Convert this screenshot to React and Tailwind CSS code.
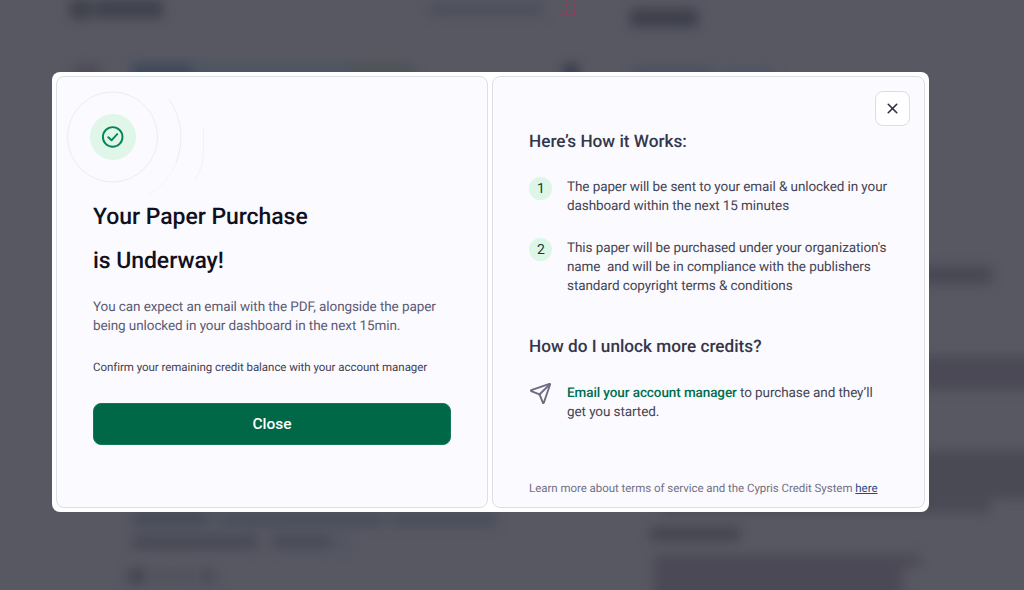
import { Send, X } from 'lucide-react'

const steps = [
  ['The paper will be sent to your email & unlocked in your', 'dashboard within the next 15 minutes'],
  [
    "This paper will be purchased under your organization's",
    'name \u00a0and will be in compliance with the publishers',
    'standard copyright terms & conditions',
  ],
]

// Blurred page behind the modal, row by row; each bar is offset from the one before it
const leftRows = [
  {
    row: 'h-[19px]',
    bars: ['ml-[70px] h-[19px] w-[22px] bg-[#3e404b]', 'ml-[3px] h-[18px] w-[68px] bg-[#3f414c]', 'ml-[266px] mt-[3px] h-[13px] w-[114px] bg-[#4c505c]'],
  },
  {
    row: 'mt-[44px] h-[20px]',
    bars: ['ml-[74px] h-[20px] w-[26px] bg-[#4e4c59]', 'ml-[32px] h-[20px] w-[60px] bg-[#3e4959]', 'h-[20px] w-[160px] bg-[#4c5562]', 'h-[20px] w-[62px] bg-[#4d5456]'],
  },
  {
    row: 'mt-[427px] h-[17px]',
    bars: ['ml-[134px] h-[17px] w-[72px] bg-[#484b58]', 'h-[17px] w-[16px] bg-[#50545f]', 'h-[17px] w-[160px] bg-[#494f5b]', 'h-[17px] w-[12px] bg-[#50545f]', 'h-[17px] w-[102px] bg-[#484f5b]'],
  },
  {
    row: 'mt-[8px] h-[14px]',
    bars: ['ml-[132px] h-[14px] w-[126px] bg-[#474955]', 'ml-[14px] h-[14px] w-[58px] bg-[#484b57]', 'h-[16px] w-[22px] bg-[#515562]'],
  },
  {
    row: 'mt-[20px] h-[14px]',
    bars: ['ml-[129px] h-[14px] w-[16px] bg-[#42434e]', 'ml-[6px] h-[14px] w-[44px] bg-[#52525d]', 'ml-[6px] h-[14px] w-[14px] bg-[#4b4b57]'],
  },
]

const rightRows = [
  { row: 'mt-[9px] h-[18px]', bars: ['ml-[58px] h-[18px] w-[68px] bg-[#3d3f4b]'] },
  {
    row: 'mt-[38px] h-[12px]',
    bars: ['ml-[-8px] h-[12px] w-[14px] bg-[#303345]', 'ml-[54px] mt-[2px] h-[12px] w-[80px] bg-[#475160]', 'ml-[10px] mt-[2px] h-[12px] w-[52px] bg-[#4e5561]'],
  },
  { row: 'mt-[189px] h-[18px]', bars: ['ml-[300px] h-[18px] w-[120px] bg-[#484854]'] },
  { row: 'mt-[72px] h-[34px]', bars: ['ml-[100px] h-[34px] w-[400px] bg-[#4a4955]'] },
  { row: 'mt-[61px] h-[62px]', bars: ['ml-[90px] h-[62px] w-[328px] bg-[#4a4a55]', 'h-[48px] w-[90px] bg-[#4a4a55]'] },
  { row: 'mt-[14px] h-[14px]', bars: ['ml-[78px] h-[14px] w-[90px] bg-[#454551]'] },
  { row: 'mt-[14px] h-[11px]', bars: ['ml-[82px] h-[11px] w-[266px] bg-[#4a4955]'] },
  { row: 'h-[50px]', bars: ['ml-[82px] h-[50px] w-[248px] bg-[#4a4955]'] },
]

const BlurredColumn = ({ rows, className }) => (
  <div className={className}>
    {rows.map(({ row, bars }) => (
      <div key={bars[0]} className={`flex items-start ${row}`}>
        {bars.map((bar) => (
          <div key={bar} className={`shrink-0 ${bar}`} />
        ))}
      </div>
    ))}
  </div>
)

const Backdrop = () => (
  <div className="absolute inset-0 overflow-hidden bg-[#585863]">
    <div className="flex h-full w-full blur-[6px]">
      <BlurredColumn rows={leftRows} className="w-[572px] shrink-0" />
      <BlurredColumn rows={rightRows} className="w-[452px] shrink-0" />
    </div>
    <svg className="absolute left-[559px] top-0" width="17" height="16" fill="none" stroke="#84405f" strokeDasharray="2 1">
      <path d="M.5 0v15M7.5 0v15M15.5 0v15M0 7.5h16M0 14.5h16" />
    </svg>
  </div>
)

const SuccessMark = () => (
  <svg className="shrink-0" width="170" height="130" viewBox="0 0 170 130" fill="none">
    <circle cx="55.5" cy="60" r="45" stroke="#ececf1" />
    <path d="M112 22a68 68 0 0 1 7 64" stroke="#ececf1" />
    <path d="M119 86a68 68 0 0 1-27 32" stroke="#f5f5f9" />
    <path d="M146.5 51v28q-2 14-9 25" stroke="#f3f3f7" />
    <circle cx="56" cy="60" r="23" fill="#dff6e8" />
    <circle cx="55.7" cy="59.9" r="9.8" stroke="#07845a" strokeWidth="1.9" />
    <path d="m51.3 60.2 3.2 3.1 5.7-6.2" stroke="#07845a" strokeWidth="1.9" strokeLinecap="round" strokeLinejoin="round" />
  </svg>
)

const StepNumber = ({ children }) => (
  <span className="-mt-px flex size-[23px] shrink-0 items-center justify-center rounded-full bg-[#dcf6e7] pl-px pt-[2px] text-[14px] text-[#1c3b35]">
    {children}
  </span>
)

export default function App() {
  return (
    <div className="relative flex h-[590px] w-[1024px] overflow-hidden bg-[#585863] pl-[52px] pt-[72px] font-['Roboto',sans-serif] [text-rendering:geometricPrecision]">
      <Backdrop />
      <div className="relative flex h-[439.5px] w-[876.5px] gap-1 rounded-lg bg-white p-1">
        <section className="flex w-[432px] shrink-0 flex-col rounded-lg border border-[#dddfe8] bg-[#fbfaff]">
          <SuccessMark />
          <div className="-mt-[12px] w-[394px] pl-9">
            <h1 className="text-[23px] font-medium leading-[44px] tracking-[-0.06px] text-[#10101e]">
              Your Paper Purchase
              <br />
              is Underway!
            </h1>
            <p className="mt-[15px] whitespace-nowrap text-[13.5px] leading-[19px] tracking-[-0.09px] text-[#5b5b72]">
              You can expect an email with the PDF, alongside the paper
              <br />
              being unlocked in your dashboard in the next 15min.
            </p>
            <p className="mt-[21px] whitespace-nowrap text-[11.5px] leading-[20px] tracking-[-0.04px] text-[#414150]">
              Confirm your remaining credit balance with your account manager
            </p>
            <button className="mt-[26px] h-[42px] w-full rounded-lg border border-[#16785a] bg-[#006747] pt-[2px] text-[15.5px] font-medium text-white">
              Close
            </button>
          </div>
        </section>

        <section className="relative flex flex-1 flex-col rounded-lg border border-[#dddfe8] bg-[#fbfaff] pl-9 pt-[54px]">
          <button className="absolute right-[14px] top-[14px] flex size-[35px] items-center justify-center rounded-lg border border-[#dcdde4] bg-white text-[#2d3048]">
            <X size={17} strokeWidth={2.3} />
          </button>
          <h2 className="text-[17.2px] font-medium leading-[22px] text-[#34364a]">Here’s How it Works:</h2>
          <ol className="mt-[25px] flex flex-col gap-[23px]">
            {steps.map((lines, i) => (
              <li key={i} className="flex gap-[15px]">
                <StepNumber>{i + 1}</StepNumber>
                <p className="text-[13.5px] leading-[19px] tracking-[-0.09px] text-[#444453]">
                  {lines.map((line) => (
                    <span key={line} className="block whitespace-nowrap">
                      {line}
                    </span>
                  ))}
                </p>
              </li>
            ))}
          </ol>
          <h2 className="mt-[40px] text-[17.2px] font-medium leading-[22px] text-[#34364a]">How do I unlock more credits?</h2>
          <div className="mt-[25px] flex gap-[15px]">
            <Send size={23} strokeWidth={2} className="-mt-px shrink-0 text-[#6d6b80]" />
            <p className="mt-px -mb-px text-[13.5px] leading-[19px] tracking-[-0.09px] text-[#444453]">
              <a className="font-medium text-[#006f4e]">Email your account manager</a> to purchase and they’ll
              <br />
              get you started.
            </p>
          </div>
          <p className="mt-[58px] whitespace-nowrap text-[11.5px] leading-[18px] tracking-[-0.04px] text-[#727083]">
            Learn more about terms of service and the Cypris Credit System{' '}
            <a className="text-[#28477f] underline">here</a>
          </p>
        </section>
      </div>
    </div>
  )
}
